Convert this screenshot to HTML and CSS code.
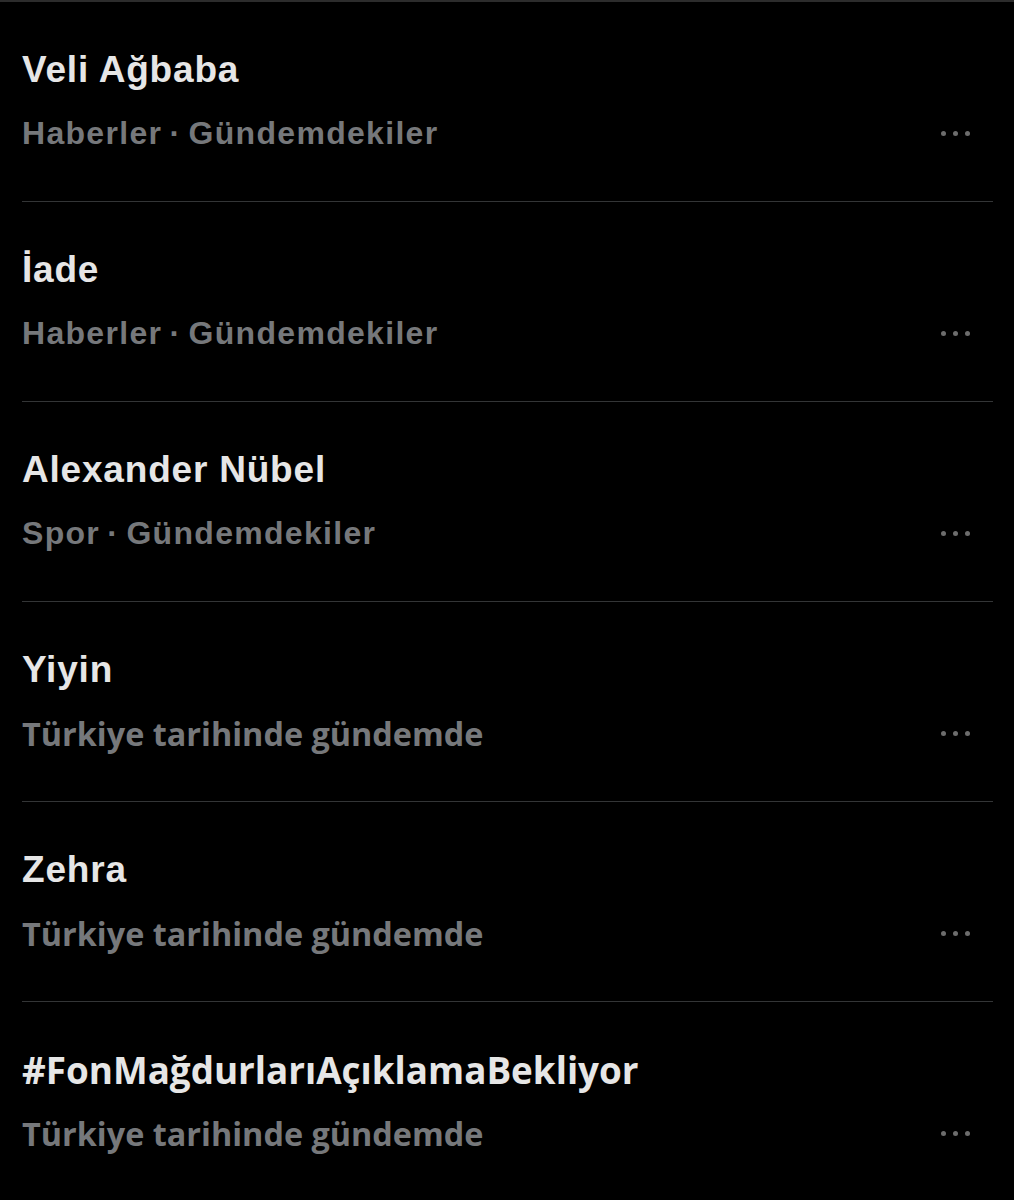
FILE: index.html
```html
<html>
    <head>
        <title>Gündem</title>
        <meta name="viewport" content="width=device-width" />
        <link rel="stylesheet" href="styles.css">
    </head>
    <body>
        <div class="trends">
            <div class="trend">
                <div class="title">Veli Ağbaba</div>
                <div class="meta">
                    <span class="sub">Haberler · Gündemdekiler</span>
                    <span class="more"><i></i><i></i><i></i></span>
                </div>
            </div>
            <div class="trend">
                <div class="title">İade</div>
                <div class="meta">
                    <span class="sub">Haberler · Gündemdekiler</span>
                    <span class="more"><i></i><i></i><i></i></span>
                </div>
            </div>
            <div class="trend">
                <div class="title">Alexander Nübel</div>
                <div class="meta">
                    <span class="sub">Spor · Gündemdekiler</span>
                    <span class="more"><i></i><i></i><i></i></span>
                </div>
            </div>
            <div class="trend alt">
                <div class="title">Yiyin</div>
                <div class="meta">
                    <span class="sub">Türkiye tarihinde gündemde</span>
                    <span class="more"><i></i><i></i><i></i></span>
                </div>
            </div>
            <div class="trend alt">
                <div class="title">Zehra</div>
                <div class="meta">
                    <span class="sub">Türkiye tarihinde gündemde</span>
                    <span class="more"><i></i><i></i><i></i></span>
                </div>
            </div>
            <div class="trend alt hashtag">
                <div class="title">#FonMağdurlarıAçıklamaBekliyor</div>
                <div class="meta">
                    <span class="sub">Türkiye tarihinde gündemde</span>
                    <span class="more"><i></i><i></i><i></i></span>
                </div>
            </div>
        </div>
    </body>
</html>
```

FILE: styles.css
```css
html {
    background: #000;
}

body {
    margin: 0;
    background: #000;
    color: #e6e6e6;
    font-family: "Liberation Sans", Arial, sans-serif;
}

.trends {
    border-top: 2px solid #2c2c2c;
}

.trend {
    height: 200px;
    box-sizing: border-box;
    margin: 0 21px 0 22px;
    padding-top: 46px;
    border-bottom: 1px solid #333536;
}

.title {
    font-size: 37px;
    font-weight: bold;
    line-height: 44px;
    letter-spacing: 0.8px;
}

.meta {
    display: flex;
    align-items: center;
    margin-top: 21px;
    height: 40px;
}

.sub {
    flex: 1;
    font-size: 32px;
    font-weight: bold;
    line-height: 40px;
    color: #76787b;
    letter-spacing: 1.3px;
    word-spacing: -3px;
}

.alt .sub {
    font-family: "Open Sans", "Noto Sans", sans-serif;
    font-size: 32.4px;
    letter-spacing: 0;
    word-spacing: 0;
}

.hashtag .title {
    font-family: "Open Sans", "Noto Sans", sans-serif;
    font-size: 36.8px;
    letter-spacing: 0;
}

.more {
    display: flex;
    gap: 7px;
    margin-right: 23px;
}

.more i {
    width: 5px;
    height: 5px;
    border-radius: 50%;
    background: #6c6c6c;
}
```
